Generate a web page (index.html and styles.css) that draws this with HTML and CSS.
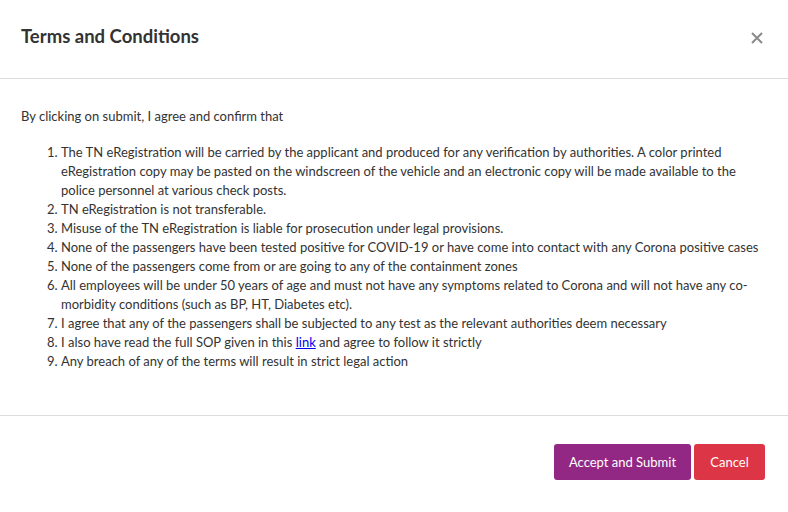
FILE: index.html
```html
<!DOCTYPE html>
<html>
<head>
<meta charset="utf-8">
<link rel="stylesheet" href="styles.css">
</head>
<body>
<div class="modal">
  <div class="modal-header">
    <h5 class="modal-title">Terms and Conditions</h5>
    <button class="close" type="button" aria-label="Close">
      <svg width="12" height="12" viewBox="0 0 12 12"><path d="M1 1L11 11M11 1L1 11" stroke="#8a8a8a" stroke-width="2" stroke-linecap="butt"/></svg>
    </button>
  </div>
  <div class="modal-body">
    <p class="intro">By clicking on submit, I agree and confirm that</p>
    <ol class="terms">
      <li>The TN eRegistration will be carried by the applicant and produced for any verification by authorities. A color printed eRegistration copy may be pasted on the windscreen of the vehicle and an electronic copy will be made available to the police personnel at various check posts.</li>
      <li>TN eRegistration is not transferable.</li>
      <li>Misuse of the TN eRegistration is liable for prosecution under legal provisions.</li>
      <li>None of the passengers have been tested positive for COVID-19 or have come into contact with any Corona positive cases</li>
      <li>None of the passengers come from or are going to any of the containment zones</li>
      <li>All employees will be under 50 years of age and must not have any symptoms related to Corona and will not have any co-morbidity conditions (such as BP, HT, Diabetes etc).</li>
      <li>I agree that any of the passengers shall be subjected to any test as the relevant authorities deem necessary</li>
      <li>I also have read the full SOP given in this <a href="#">link</a> and agree to follow it strictly</li>
      <li>Any breach of any of the terms will result in strict legal action</li>
    </ol>
  </div>
  <div class="modal-footer">
    <button class="btn btn-accept" type="button">Accept and Submit</button>
    <button class="btn btn-cancel" type="button">Cancel</button>
  </div>
</div>
</body>
</html>
```
FILE: styles.css
```css
* { box-sizing: border-box; }
html, body { margin: 0; padding: 0; background: #fff; }
body {
  font-family: "Lato", "Noto Sans", sans-serif;
  color: #333;
  font-size: 13px;
  line-height: 19px;
}
.modal { width: 788px; height: 512px; display: flex; flex-direction: column; }
.modal-header {
  height: 79px;
  display: flex;
  align-items: center;
  justify-content: space-between;
  padding: 0 21px 5px 21px;
  border-bottom: 1px solid #dcdcdc;
}
.modal-title { margin: 0; font-size: 18.5px; font-weight: 700; color: #333; }
.close {
  border: 0; background: none; padding: 0; margin-right: 3px; margin-top: 3px; cursor: pointer;
  display: flex; width: 14px; height: 14px; align-items: center; justify-content: center;
}
.modal-body { padding: 28px 21px 0 21px; height: 337px; border-bottom: 1px solid #dcdcdc; }
.intro { margin: 0 0 17px 0; font-size: 13px; }
.terms { margin: 0; padding-left: 40px; color: #333; }
.terms a { color: #0000ee; text-decoration: underline; }
.modal-footer {
  display: flex;
  justify-content: flex-end;
  align-items: flex-start;
  gap: 3px;
  padding: 28px 23px 0 0;
}
.btn {
  font-family: inherit;
  font-size: 13px;
  color: #fff;
  border: 0;
  border-radius: 3px;
  height: 36px;
  padding: 0;
  white-space: nowrap;
  cursor: pointer;
}
.btn-accept { background: #922883; width: 137px; }
.btn-cancel { background: #dc3545; width: 71px; }
```
